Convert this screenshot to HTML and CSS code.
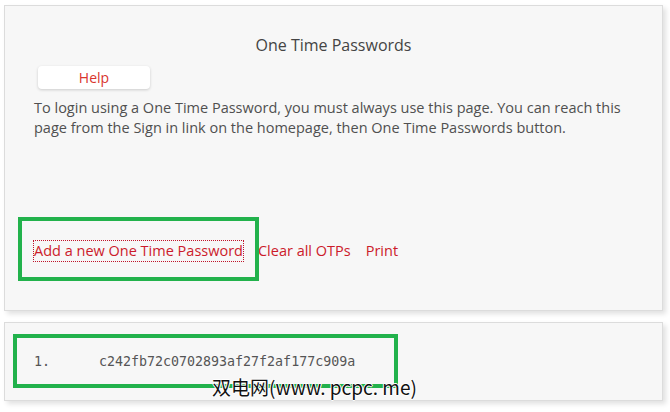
FILE: index.html
```html
<!DOCTYPE html>
<html>
<head>
<meta charset="utf-8">
<link rel="stylesheet" href="styles.css">
</head>
<body>
<div class="page">
  <section class="panel main">
    <h1 class="title">One Time Passwords</h1>
    <div class="help-row"><button class="help">Help</button></div>
    <p class="intro">To login using a One Time Password, you must always use this page. You can reach this page from the Sign in link on the homepage, then One Time Passwords button.</p>
    <div class="actions">
      <a class="link focused">Add a new One Time Password</a>
      <a class="link">Clear all OTPs</a>
      <a class="link">Print</a>
    </div>
    <div class="mark mark-1"></div>
  </section>
  <section class="panel list">
    <ol class="otps">
      <li><span class="num">1.</span><span class="code">c242fb72c0702893af27f2af177c909a</span></li>
    </ol>
    <div class="mark mark-2"></div>
  </section>
  <div class="watermark">双电网(www. pcpc. me)</div>
</div>
</body>
</html>
```
FILE: styles.css
```css
html, body {
  margin: 0;
  padding: 0;
  background: #ffffff;
}
.page {
  position: relative;
  width: 670px;
  height: 412px;
  padding: 5px 7px 0 4px;
  box-sizing: border-box;
  font-family: "Open Sans", "Noto Sans", sans-serif;
}
.panel {
  position: relative;
  background: #f7f7f7;
  border: 1px solid #dcdcdc;
  box-shadow: 3px 3px 5px rgba(0, 0, 0, 0.12);
  box-sizing: border-box;
}
.main {
  height: 306px;
  padding: 29px 0 0 29px;
}
.title {
  margin: 0;
  font-size: 16px;
  font-weight: 400;
  color: #444;
  text-align: center;
  line-height: 21px;
  padding-right: 29px;
}
.help-row {
  margin-top: 10px;
  padding-left: 4px;
}
.help {
  width: 112px;
  height: 23px;
  border: none;
  border-radius: 4px;
  background: #fff;
  box-shadow: 0 1px 3px rgba(0, 0, 0, 0.18);
  color: #d9352d;
  font-family: "Open Sans", "Noto Sans", sans-serif;
  font-size: 14px;
  padding: 0;
  line-height: 23px;
}
.intro {
  margin: 9px 0 0 0;
  font-size: 14.5px;
  line-height: 20px;
  color: #505050;
  padding-right: 20px;
}
.actions {
  display: flex;
  gap: 15px;
  margin-top: 103px;
  font-size: 14.5px;
  line-height: 20px;
}
.link {
  color: #cc1b2b;
}
.focused {
  outline: 1px dotted #c0142a;
  outline-offset: 0px;
}
.mark {
  position: absolute;
  border: 4px solid #22b24c;
}
.mark-1 {
  left: 13px;
  top: 211px;
  width: 233px;
  height: 56px;
}
.list {
  margin-top: 11px;
  height: 79px;
}
.otps {
  list-style: none;
  margin: 0;
  padding: 30px 0 0 29px;
  font-family: "DejaVu Sans Mono", monospace;
  font-size: 13.3px;
  color: #555;
  line-height: 18px;
}
.otps li {
  display: flex;
}
.num {
  width: 65px;
}
.mark-2 {
  left: 8px;
  top: 11px;
  width: 377px;
  height: 46px;
}
.watermark {
  position: absolute;
  left: 212px;
  top: 375px;
  font-family: "Noto Sans CJK SC", sans-serif;
  font-size: 19px;
  line-height: 23px;
  color: #111;
  text-shadow: 1px 0 0 #fff, -1px 0 0 #fff, 0 1px 0 #fff, 0 -1px 0 #fff;
}
```
